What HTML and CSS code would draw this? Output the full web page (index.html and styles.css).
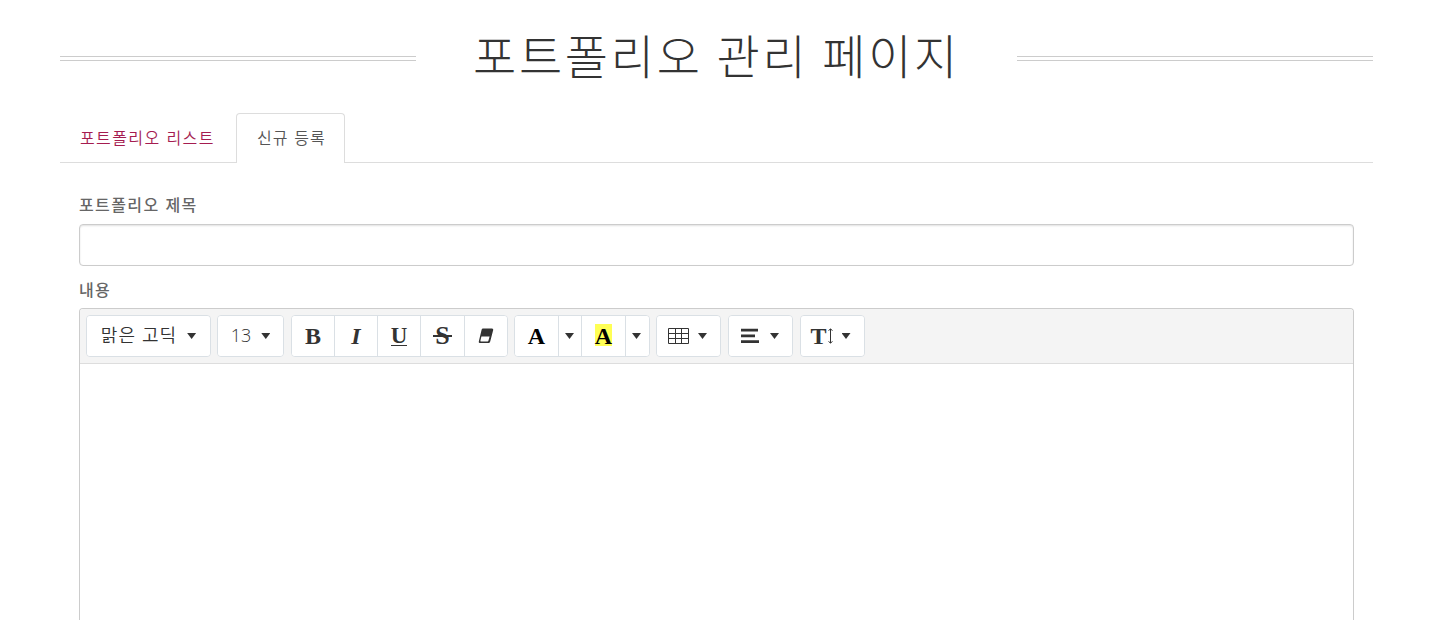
FILE: index.html
```
<!DOCTYPE html>
<html lang="ko">
<head>
    <meta charset="UTF-8">
    <meta name="viewport" content="width=device-width, initial-scale=1.0">
    <title>포트폴리오 관리 페이지</title>
    <link rel="stylesheet" href="styles.css">
</head>
<body>
    <div class="container">
        <header class="page-title">
            <span class="line"></span>
            <h1>포트폴리오 관리 페이지</h1>
            <span class="line"></span>
        </header>

        <nav class="tabs">
            <a href="#list" class="tab">포트폴리오 리스트</a>
            <a href="#new" class="tab active">신규 등록</a>
        </nav>

        <form class="tab-content">
            <label for="title">포트폴리오 제목</label>
            <input type="text" id="title" class="form-control">

            <label for="content" class="label-content">내용</label>
            <div class="editor">
                <div class="toolbar">
                    <div class="btn-group">
                        <button type="button" class="btn btn-font"><span class="btn-text">맑은 고딕</span><i class="caret"></i></button>
                    </div>
                    <div class="btn-group">
                        <button type="button" class="btn btn-size"><span class="btn-text">13</span><i class="caret"></i></button>
                    </div>
                    <div class="btn-group style">
                        <button type="button" class="btn"><b class="glyph">B</b></button>
                        <button type="button" class="btn"><b class="glyph italic">I</b></button>
                        <button type="button" class="btn"><b class="glyph underline">U</b></button>
                        <button type="button" class="btn btn-wide"><b class="glyph strike">S</b></button>
                        <button type="button" class="btn">
                            <svg width="16" height="16" viewBox="0 0 16 16">
                                <path d="M5 .5h9q1.600 0 1.200 1.500l-3 11.500q-.4 1.500-1.800 1.500H2Q.4 15 .8 13.500L3.600 1.800Q3.900.5 5 .5z" fill="#333"/>
                                <path d="M3.400 8.500h8.200l-1.200 4.300q-.2.700-.8.700H2.900q-.7 0-.5-.7z" fill="#fff"/>
                            </svg>
                        </button>
                    </div>
                    <div class="btn-group color">
                        <button type="button" class="btn btn-color"><b class="glyph black">A</b></button>
                        <button type="button" class="btn btn-toggle"><i class="caret"></i></button>
                        <button type="button" class="btn btn-wide"><b class="glyph black marker">A</b></button>
                        <button type="button" class="btn btn-toggle last"><i class="caret"></i></button>
                    </div>
                    <div class="btn-group">
                        <button type="button" class="btn btn-drop">
                            <svg width="21" height="16" viewBox="0 0 21 16" fill="none" stroke="#333">
                                <path d="M.5.500h20v15H.500zM.500 5.500h20M.500 10.500h20M7.500.500v15M13.500.500v15"/>
                            </svg>
                            <i class="caret"></i>
                        </button>
                    </div>
                    <div class="btn-group">
                        <button type="button" class="btn btn-drop">
                            <svg width="21" height="16" viewBox="0 0 21 16" fill="#333">
                                <path d="M1 .8h17v2.700H1zM1 6.600h14v2.700H1zM1 12.300h18V15H1z"/>
                            </svg>
                            <i class="caret"></i>
                        </button>
                    </div>
                    <div class="btn-group">
                        <button type="button" class="btn btn-drop btn-height">
                            <span class="height-icon">
                                <b class="glyph">T</b>
                                <svg width="6" height="16" viewBox="0 0 6 16">
                                    <path d="M3.500 1v14M1.500 2.500l2-1.500 2 1.500M1.500 13.500l2 1.500 2-1.500" fill="none" stroke="#333"/>
                                </svg>
                            </span>
                            <i class="caret"></i>
                        </button>
                    </div>
                </div>
                <div class="editable" id="content" contenteditable="true"></div>
            </div>
        </form>
    </div>
</body>
</html>
```
FILE: styles.css
```
* {
    box-sizing: border-box;
}
body {
    margin: 0;
    font-family: "Noto Sans CJK KR", "Noto Sans", sans-serif;
    font-size: 16px;
    font-weight: 350;
    letter-spacing: 1.4px;
    color: #555;
    background: #fff;
}
.container {
    width: 1313px;
    height: 100vh;
    margin: 0 auto;
    overflow: hidden;
}

/* Title with a double line on both sides */
.page-title {
    display: flex;
    align-items: center;
    height: 113px;
}
.page-title .line {
    flex: 1;
    height: 5px;
    border-top: 1px solid #ccc;
    border-bottom: 1px solid #ccc;
    margin-top: 4px;
}
.page-title h1 {
    width: 601px;
    margin: 0;
    padding-bottom: 6px;
    text-align: center;
    font-size: 47px;
    font-weight: 300;
    line-height: 60px;
    letter-spacing: 2.7px;
    word-spacing: -2px;
    white-space: nowrap;
    color: #333;
}

/* Tabs */
.tabs {
    display: flex;
    height: 50px;
    border-bottom: 1px solid #ddd;
}
.tab {
    height: 50px;
    width: 174px;
    padding: 0 0 0 20px;
    margin-right: 2px;
    line-height: 48px;
    white-space: nowrap;
    text-decoration: none;
    color: #a51c50;
}
.tab.active {
    width: 109px;
    line-height: 46px;
    letter-spacing: 1.1px;
    color: #555;
    background: #fff;
    border: 1px solid #ddd;
    border-bottom: 0;
    border-radius: 4px 4px 0 0;
}

/* Form */
.tab-content {
    padding: 30px 19px 0;
}
label {
    display: block;
    height: 24px;
    line-height: 22px;
    margin-bottom: 7px;
    font-weight: 500;
    color: #666;
}
.label-content {
    margin: 12px 0 6px;
}
.form-control {
    display: block;
    width: 1275px;
    height: 42px;
    padding: 6px 12px;
    border: 1px solid #ccc;
    border-radius: 4px;
    box-shadow: inset 0 1px 2px rgba(0, 0, 0, 0.12);
}

/* Editor */
.editor {
    width: 1275px;
    border: 1px solid #ccc;
    border-bottom: 0;
    border-radius: 4px 4px 0 0;
    overflow: hidden;
}
.toolbar {
    display: flex;
    gap: 7px;
    height: 55px;
    padding: 6px;
    background: #f4f4f4;
    border-bottom: 1px solid #ddd;
}
.btn-group {
    display: flex;
    height: 42px;
    border: 1px solid #dae0e5;
    border-radius: 4px;
    background: #fff;
    overflow: hidden;
}
.btn-group:first-child,
.style,
.color {
    margin-right: -1px;
}
.btn {
    display: flex;
    align-items: center;
    justify-content: center;
    width: 43px;
    padding: 0;
    border: 0;
    background: #fff;
    font: inherit;
    letter-spacing: 1px;
    color: #333;
}
.btn + .btn {
    border-left: 1px solid #dae0e5;
}
.btn:first-child {
    width: 42px;
}
.btn-wide {
    width: 44px;
}
.btn.btn-font {
    width: 123px;
    font-size: 18px;
}
.btn.btn-size {
    width: 65px;
    font-size: 18px;
}
.btn-text {
    padding-bottom: 5px;
}
.btn-size .btn-text {
    padding-bottom: 2px;
    font-family: "Open Sans", sans-serif;
    font-weight: 350;
    letter-spacing: 0;
}
.btn-font .caret,
.btn-size .caret {
    margin-left: 10px;
}
.btn.btn-color {
    width: 43px;
}
.btn-toggle {
    width: 23px;
    padding-right: 1px;
}
.btn-toggle.last {
    width: 24px;
    padding-right: 2px;
}
.btn.btn-drop {
    width: 63px;
    gap: 9px;
    padding-right: 2px;
}
.btn.btn-height {
    padding-right: 4px;
}
.caret {
    width: 9px;
    height: 6px;
    background: #333;
    clip-path: polygon(0 0, 100% 0, 50% 100%);
}
.glyph {
    font-family: "Liberation Serif", serif;
    font-size: 24px;
    font-weight: bold;
    line-height: 24px;
    letter-spacing: 0;
}
.italic {
    font-style: italic;
}
.underline {
    font-size: 23px;
    line-height: 18px;
    border-bottom: 1px solid #333;
}
.strike {
    font-size: 26px;
    background: linear-gradient(#333, #333) 0 11px / 100% 2px no-repeat;
    padding: 0 2px;
}
.black {
    color: #000;
}
.marker {
    height: 22px;
    margin-bottom: 3px;
    background: #ff5;
}
.height-icon {
    display: flex;
    align-items: center;
}
.editable {
    height: 256px;
    outline: none;
}
```
